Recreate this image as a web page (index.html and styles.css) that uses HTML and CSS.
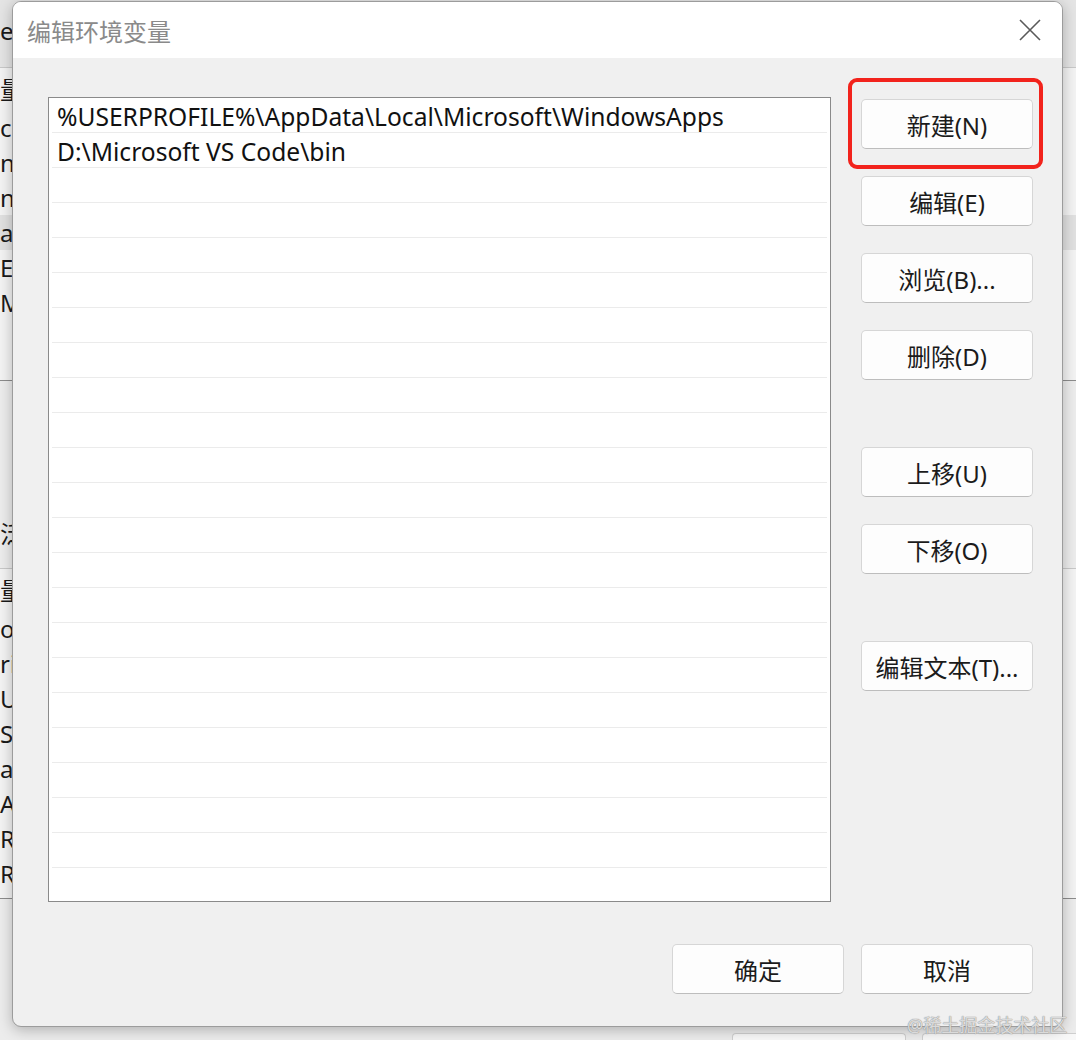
FILE: index.html
```html
<!DOCTYPE html>
<html lang="zh-CN">
<head>
    <meta charset="UTF-8">
    <title>编辑环境变量</title>
    <link rel="stylesheet" href="styles.css">
</head>
<body>

    <!-- Parent window behind the dialog -->
    <div class="backdrop">
        <div class="bg-head">er</div>
        <div class="bg-list">
            <div class="bg-row bg-header">量</div>
            <div class="bg-row">c</div>
            <div class="bg-row">n</div>
            <div class="bg-row">n</div>
            <div class="bg-row selected">at</div>
            <div class="bg-row">EN</div>
            <div class="bg-row">M</div>
        </div>
        <div class="bg-gap">泛</div>
        <div class="bg-list second">
            <div class="bg-row bg-header">量</div>
            <div class="bg-row">o</div>
            <div class="bg-row">ri</div>
            <div class="bg-row">U</div>
            <div class="bg-row">S</div>
            <div class="bg-row">at</div>
            <div class="bg-row">A</div>
            <div class="bg-row">R</div>
            <div class="bg-row">R</div>
        </div>
        <div class="bg-foot">
            <div class="bg-btn"></div>
            <div class="bg-btn"></div>
        </div>
    </div>

    <!-- Edit environment variable dialog -->
    <div class="dialog">
        <div class="titlebar">
            <span class="title">编辑环境变量</span>
            <svg class="close" width="22" height="22" viewBox="0 0 22 22">
                <path d="M1 1 L21 21 M21 1 L1 21" stroke="#5a5a5a" stroke-width="1.6" fill="none"/>
            </svg>
        </div>

        <div class="dialog-body">
            <div class="main">
                <div class="listbox">
                    <div class="row">%USERPROFILE%\AppData\Local\Microsoft\WindowsApps</div>
                    <div class="row">D:\Microsoft VS Code\bin</div>
                    <div class="row"></div>
                    <div class="row"></div>
                    <div class="row"></div>
                    <div class="row"></div>
                    <div class="row"></div>
                    <div class="row"></div>
                    <div class="row"></div>
                    <div class="row"></div>
                    <div class="row"></div>
                    <div class="row"></div>
                    <div class="row"></div>
                    <div class="row"></div>
                    <div class="row"></div>
                    <div class="row"></div>
                    <div class="row"></div>
                    <div class="row"></div>
                    <div class="row"></div>
                    <div class="row"></div>
                    <div class="row"></div>
                    <div class="row"></div>
                    <div class="row last"></div>
                </div>

                <div class="side-buttons">
                    <button class="btn">新建(N)</button>
                    <button class="btn">编辑(E)</button>
                    <button class="btn">浏览(B)...</button>
                    <button class="btn">删除(D)</button>
                    <button class="btn group">上移(U)</button>
                    <button class="btn">下移(O)</button>
                    <button class="btn group">编辑文本(T)...</button>
                </div>
            </div>

            <div class="footer">
                <button class="btn">确定</button>
                <button class="btn">取消</button>
            </div>
        </div>

        <!-- red highlight drawn on the screenshot -->
        <div class="highlight"></div>
    </div>

    <div class="watermark">@稀土掘金技术社区</div>

</body>
</html>
```

FILE: styles.css
```css
/* General */
body { margin: 0; width: 1076px; height: 1040px; overflow: hidden; position: relative;
       background: #e9e9e9; font-family: "Noto Sans", "Noto Sans CJK SC", sans-serif; color: #1a1a1a; }

/* Parent window (mostly hidden) */
.backdrop { height: 1040px; display: flex; flex-direction: column; font-size: 24px; white-space: nowrap; }
.bg-head { height: 67px; background: #e4e4e4; line-height: 62px; }
.bg-list { height: 312px; background: #f3f3f3; border-top: 1px solid #c8c8c8; border-bottom: 1px solid #8c8c8c; }
.bg-list.second { height: 329px; }
.bg-row { height: 35px; line-height: 35px; }
.bg-header { height: 42px; line-height: 44px; }
.bg-row.selected { background: #e0e0e0; }
.bg-gap { height: 187px; box-sizing: border-box; background: #ececec; display: flex; align-items: flex-end;
          padding-bottom: 18px; }
.bg-foot { flex: 1; background: #ececec; display: flex; align-items: flex-end; gap: 16px; padding-left: 732px; }
.bg-btn { flex: none; width: 172px; height: 6px; background: #f8f8f8; border: 1px solid #cfcfcf; border-bottom: none; border-radius: 4px 4px 0 0; }

/* Dialog */
.dialog { position: absolute; left: 12px; top: 1px; width: 1051px; height: 1026px; box-sizing: border-box;
          border: 1px solid #9c9c9c; border-radius: 9px; background: #f0f0f0; overflow: hidden;
          display: flex; flex-direction: column; box-shadow: 0 3px 14px rgba(0, 0, 0, 0.25); }
.titlebar { height: 56px; flex: none; background: #fff; display: flex; align-items: center;
            justify-content: space-between; padding: 0 21px 0 14px; }
.title { font-size: 24px; color: #8a8a8a; }
.close { display: block; }

.dialog-body { flex: 1; display: flex; flex-direction: column; padding: 39px 29px 32px 35px; }
.main { flex: 1; display: flex; gap: 30px; }

/* List of paths */
.listbox { width: 783px; height: 805px; box-sizing: border-box; border: 1px solid #8a8a8a; background: #fff;
           padding: 0 3px; overflow: hidden; }
.row { height: 35px; box-sizing: border-box; border-bottom: 1px solid #ebebeb; padding-left: 5px;
       font-size: 24.6px; line-height: 37px; white-space: nowrap; color: #111; }
.row.last { border-bottom: none; }

/* Buttons */
.side-buttons { display: flex; flex-direction: column; gap: 27px; padding-top: 2px; }
.btn { width: 172px; height: 50px; flex: none; box-sizing: border-box; background: #fdfdfd;
       border: 1px solid #d6d6d6; border-bottom-color: #bdbdbd; border-radius: 5px;
       font-family: inherit; font-size: 24px; color: #1b1b1b; padding: 0; cursor: pointer; }
.btn.group { margin-top: 40px; }

.footer { display: flex; justify-content: flex-end; gap: 17px; margin-top: 41px; }

/* Red box around the "new" button */
.highlight { position: absolute; left: 835px; top: 76px; width: 195px; height: 91px; box-sizing: border-box;
             border: 4px solid #f2231c; border-radius: 9px; }

/* Site watermark */
.watermark { position: absolute; left: 907px; top: 1011px; font-size: 18px; color: rgba(255, 255, 255, 0.7);
             text-shadow: 0 0 1px #8a8a8a, 0 0 1px #8a8a8a; white-space: nowrap; }
```
